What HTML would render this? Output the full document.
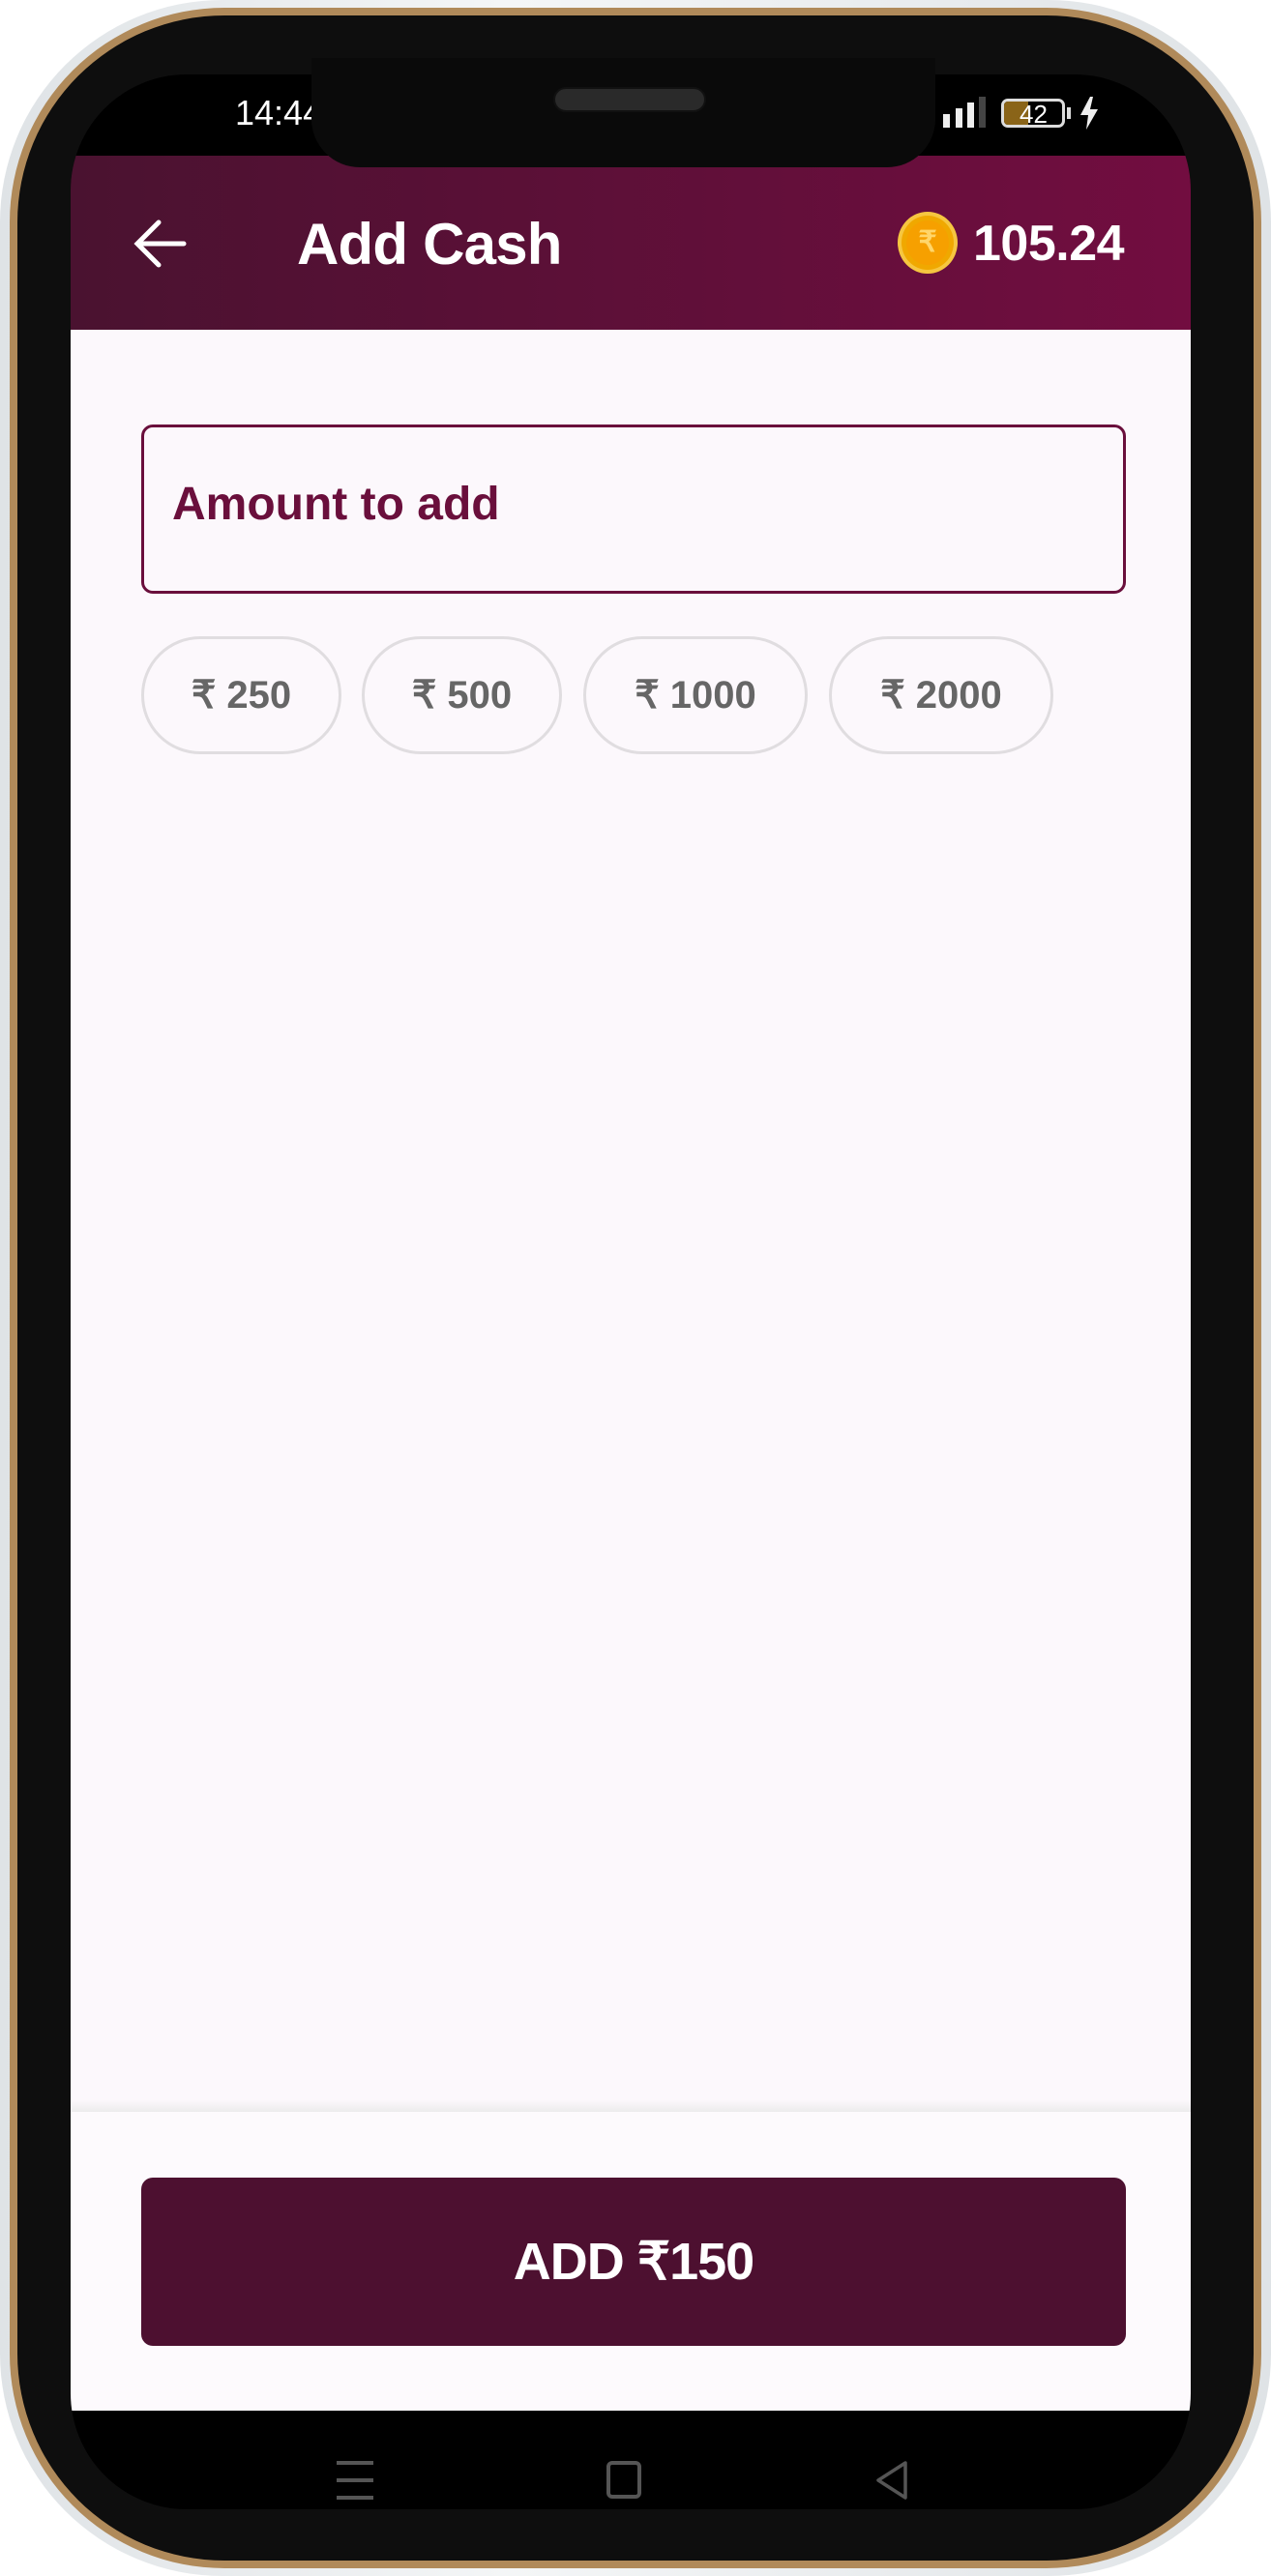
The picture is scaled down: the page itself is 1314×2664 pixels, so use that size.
<!DOCTYPE html>
<html><head><meta charset="utf-8"><style>
*{margin:0;padding:0;box-sizing:border-box}
body{width:1314px;height:2664px;background:#fff;position:relative;overflow:hidden;font-family:"Liberation Sans",sans-serif}
.abs{position:absolute}
.f1{left:0;top:0;width:1314px;height:2664px;border-radius:230px;background:linear-gradient(90deg,#dfe3e6,#f4f6f7 40%,#dfe3e6)}
.f2{left:10px;top:8px;width:1294px;height:2648px;border-radius:222px;background:#b08a5a}
.f3{left:18px;top:16px;width:1278px;height:2632px;border-radius:214px;background:#0e0e0e}
.scr{left:73px;top:77px;width:1158px;height:2518px;border-radius:120px;background:#000;overflow:hidden}
</style></head><body>
<div class="abs f1"></div><div class="abs f2"></div><div class="abs f3"></div>
<div class="abs scr">
  <div class="abs" style="left:0;top:84px;width:1158px;height:180px;background:linear-gradient(90deg,#4a1230,#720d40)"></div>
  <div class="abs" style="left:0;top:264px;width:1158px;height:1921px;background:#fcf8fc"></div>
  <div class="abs" style="left:0;top:2095px;width:1158px;height:12px;background:linear-gradient(#fcf8fc,#ececec)"></div>
  <div class="abs" style="left:0;top:2107px;width:1158px;height:309px;background:#fdfafd"></div>
</div>
<!-- status -->
<div class="abs" style="left:243px;top:96px;color:#fff;font-size:36px">14:44</div>
<div class="abs" style="left:975px;top:118px;width:7px;height:14px;background:#eee"></div>
<div class="abs" style="left:988px;top:112px;width:7px;height:20px;background:#eee"></div>
<div class="abs" style="left:1000px;top:106px;width:7px;height:26px;background:#eee"></div>
<div class="abs" style="left:1012px;top:100px;width:7px;height:32px;background:#444"></div>
<div class="abs" style="left:1035px;top:102px;width:66px;height:30px;border:3px solid #ddd;border-radius:7px;overflow:hidden"><div style="width:25px;height:100%;background:#8a6418"></div><span class="abs" style="left:16px;top:-2px;color:#fff;font-size:26px">42</span></div>
<div class="abs" style="left:1103px;top:111px;width:4px;height:12px;background:#ddd"></div>
<svg class="abs" style="left:1115px;top:100px" width="22" height="34" viewBox="0 0 22 34"><path d="M12 0L2 19h8l-2 15 12-21h-8l3-13z" fill="#eee"/></svg>
<!-- notch -->
<div class="abs" style="left:322px;top:60px;width:645px;height:113px;background:#0a0a0a;border-radius:0 0 50px 50px"></div>
<div class="abs" style="left:572px;top:90px;width:158px;height:26px;border-radius:13px;background:#2a2a2a;border:2px solid #111"></div>
<!-- header -->
<svg class="abs" style="left:136px;top:226px" width="58" height="52" viewBox="0 0 58 52"><path d="M54 26H6M28 4L6 26l22 22" fill="none" stroke="#fff" stroke-width="5" stroke-linecap="round"/></svg>
<div class="abs" style="left:307px;top:218px;color:#fff;font-size:60px;font-weight:bold;letter-spacing:-0.8px">Add Cash</div>
<div class="abs" style="left:928px;top:219px;width:62px;height:64px;border-radius:50%;background:#f0a800;border:4px solid #f6c640"><div style="position:absolute;left:5px;top:5px;right:5px;bottom:5px;border-radius:50%;background:#f6a000;color:#ffd66a;font-size:30px;font-weight:bold;text-align:center;line-height:46px">₹</div></div>
<div class="abs" style="left:1006px;top:222px;color:#fff;font-size:52px;font-weight:bold;letter-spacing:-0.5px">105.24</div>
<!-- input -->
<div class="abs" style="left:146px;top:439px;width:1018px;height:175px;border:3px solid #6a0f3c;border-radius:12px"></div>
<div class="abs" style="left:178px;top:494px;color:#6a0f3c;font-size:48px;font-weight:bold;letter-spacing:0px">Amount to add</div>
<!-- chips -->
<div class="abs" style="left:146px;top:658px;width:207px;height:122px;border:3px solid #e0dde0;border-radius:61px;color:#666;font-size:40px;font-weight:bold;text-align:center;line-height:116px">₹ 250</div>
<div class="abs" style="left:374px;top:658px;width:207px;height:122px;border:3px solid #e0dde0;border-radius:61px;color:#666;font-size:40px;font-weight:bold;text-align:center;line-height:116px">₹ 500</div>
<div class="abs" style="left:603px;top:658px;width:232px;height:122px;border:3px solid #e0dde0;border-radius:61px;color:#666;font-size:40px;font-weight:bold;text-align:center;line-height:116px">₹ 1000</div>
<div class="abs" style="left:857px;top:658px;width:232px;height:122px;border:3px solid #e0dde0;border-radius:61px;color:#666;font-size:40px;font-weight:bold;text-align:center;line-height:116px">₹ 2000</div>
<!-- button -->
<div class="abs" style="left:146px;top:2252px;width:1018px;height:174px;background:#4d1030;border-radius:12px;color:#fff;font-size:54px;font-weight:bold;text-align:center;line-height:174px;letter-spacing:-1px">ADD ₹150</div>
<!-- nav -->
<div class="abs" style="left:348px;top:2545px;width:38px;height:4px;background:#555"></div>
<div class="abs" style="left:348px;top:2563px;width:38px;height:4px;background:#555"></div>
<div class="abs" style="left:348px;top:2581px;width:38px;height:4px;background:#555"></div>
<div class="abs" style="left:627px;top:2545px;width:36px;height:39px;border:4px solid #555;border-radius:6px"></div>
<svg class="abs" style="left:902px;top:2544px" width="40" height="42" viewBox="0 0 40 42"><path d="M34 3L6 21l28 18z" fill="none" stroke="#555" stroke-width="3.5" stroke-linejoin="round"/></svg>
</body></html>
